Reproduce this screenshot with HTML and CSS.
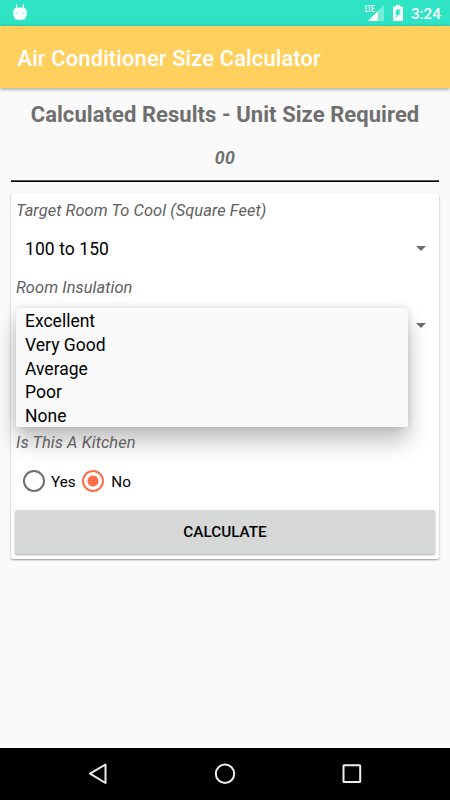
FILE: index.html
```html
<!DOCTYPE html>
<html lang="en">
<head>
<meta charset="utf-8">
<title>Air Conditioner Size Calculator</title>
<link rel="stylesheet" href="styles.css">
</head>
<body>
<div class="screen">
  <header class="status">
    <svg class="droid" width="14" height="18" viewBox="0 0 14 18">
      <path d="M3.300 0 4 4M10.700 0 10 4" stroke="#fff" stroke-width="1.2"/>
      <path d="M1.200 4.500Q7 2.600 12.800 4.500V13.500Q12.500 15.800 7 15.800T1.200 13.500Z" fill="#fff"/>
      <path d="M.6 6v6M13.400 6v6" stroke="#fff" stroke-width=".8"/>
      <circle cx="4" cy="9" r=".7" fill="#2ee4c4"/><circle cx="10" cy="9" r=".7" fill="#2ee4c4"/>
    </svg>
    <div class="status-right">
      <div class="signal">
        <svg width="20" height="18" viewBox="0 0 20 18">
          <path d="M19 1V17H3Z" fill="#fff" opacity=".35"/>
          <path d="M0 0H11.500V9H0Z" fill="#2ee4c4"/>
          <path d="M13 7V17H3Z" fill="#fff"/>
        </svg>
        <span class="lte">LTE</span>
      </div>
      <svg class="battery" width="10" height="16" viewBox="0 0 10 16">
        <path d="M3 0H7V1.500H9Q10 1.500 10 2.500V15Q10 16 9 16H1Q0 16 0 15V2.500Q0 1.500 1 1.500H3Z" fill="#fff"/>
        <path d="M3.500 4.500H8L6 7.500H8L2.500 13.500 4 9.500H2Z" fill="#2ee4c4"/>
      </svg>
      <span class="clock">3:24</span>
    </div>
  </header>
  <div class="toolbar"><h1>Air Conditioner Size Calculator</h1></div>
  <main>
    <h2>Calculated Results - Unit Size Required</h2>
    <p class="result">00</p>
    <hr>
    <section class="card">
      <label class="label">Target Room To Cool (Square Feet)</label>
      <div class="spinner"><span>100 to 150</span><i class="caret"></i></div>
      <label class="label">Room Insulation</label>
      <div class="spinner open">
        <i class="caret"></i>
        <ul class="menu">
          <li>Excellent</li><li>Very Good</li><li>Average</li><li>Poor</li><li>None</li>
        </ul>
      </div>
      <label class="label kitchen">Is This A Kitchen</label>
      <div class="radios">
        <span class="radio"></span><span class="yes">Yes</span>
        <span class="radio checked"></span><span class="no">No</span>
      </div>
      <button class="button">CALCULATE</button>
    </section>
  </main>
  <nav>
    <svg width="20" height="22" viewBox="0 0 20 22"><path d="M16.500 1.500V20L1 10.700Z"/></svg>
    <svg width="22" height="22" viewBox="0 0 22 22"><circle cx="11" cy="10.700" r="9.200"/></svg>
    <svg width="20" height="20" viewBox="0 0 20 20"><rect x="1.500" y="1.200" width="16.700" height="16.700" rx=".5"/></svg>
  </nav>
</div>
</body>
</html>
```
FILE: styles.css
```css
* { box-sizing: border-box; margin: 0; padding: 0; }
body { font-family: Roboto, sans-serif; background: #fafafa; color: #000; }
.screen { width: 450px; height: 800px; display: flex; flex-direction: column; overflow: hidden; }

.status { height: 26px; background: #2ee4c4; display: flex; justify-content: space-between; padding: 0 9px 0 13px; }
.droid { margin-top: 4px; }
.status-right { display: flex; }
.signal { position: relative; width: 28px; }
.signal svg { display: block; margin-top: 4px; }
.lte { position: absolute; left: 0; top: 4px; font-size: 9px; line-height: 10px; font-weight: 700; color: #fff; transform: scaleX(.66); transform-origin: left; }
.battery { margin-top: 5px; }
.clock { margin-left: 8px; font-size: 15.3px; line-height: 28px; font-weight: 500; color: #fff; }

.toolbar { height: 62px; padding-left: 17.5px; background: #ffd05e; box-shadow: 0 1px 4px rgba(0, 0, 0, .4); position: relative; }
.toolbar h1 { font-size: 21.9px; line-height: 65px; letter-spacing: .14px; font-weight: 500; color: #fff; white-space: nowrap; }

main { flex: 1; padding: 0 11px; }
h2 { margin-top: 12px; font-size: 22px; line-height: 30px; letter-spacing: .06px; font-weight: 700; color: #6f6f6f; text-align: center; white-space: nowrap; }
.result { margin-top: 16px; font-size: 17.8px; line-height: 24px; letter-spacing: .3px; font-weight: 700; font-style: italic; color: #6f6f6f; text-align: center; }
hr { margin-top: 10px; height: 2px; border: 0; border-top: 1px solid #555; background: #000; }

.card { margin-top: 11px; height: 366px; background: #fff; border-radius: 2px; box-shadow: 0 1px 2px rgba(0, 0, 0, .4); padding: 5px 4px 0; display: flex; flex-direction: column; }
.label { padding-left: 1px; font-size: 16.4px; line-height: 25px; letter-spacing: .07px; font-style: italic; color: #606060; white-space: nowrap; }
.spinner { height: 52px; padding: 0 9px 0 10px; display: flex; align-items: center; justify-content: space-between; font-size: 17.5px; letter-spacing: .08px; position: relative; }
.spinner span { margin-top: -1px; }
.caret { width: 0; height: 0; margin-top: -1px; border: 5.500px solid transparent; border-top-color: #6d6d6d; border-bottom: 0; }
.open { justify-content: flex-end; height: 103px; align-items: flex-start; padding-top: 24px; }
.menu { position: absolute; left: 1px; top: 8px; width: 392px; height: 119px; padding: 1px 9px 0; list-style: none; background: #fafafa; border-radius: 2px; box-shadow: 0 15px 22px rgba(0, 0, 0, .24), 0 0 9px rgba(0, 0, 0, .14); letter-spacing: 0; }
.menu li { height: 23.8px; line-height: 25px; }
.kitchen { margin-top: 27px; position: relative; }
.radios { display: flex; align-items: center; margin-top: 15px; padding-left: 8px; height: 22px; font-size: 15.3px; }
.radio { width: 22px; height: 22px; border: 2px solid #6f6f6f; border-radius: 50%; flex: none; }
.checked { border-color: #ff6e4a; background: radial-gradient(circle, #ff6e4a 5px, transparent 6px); }
.yes { margin: 1px 6.500px 0 6px; }
.no { margin: 1px 0 0 7px; }
.button { margin-top: 18px; height: 44px; width: 420px; border: 0; border-radius: 2px; background: #d6d8d7; box-shadow: 0 1px 2px rgba(0, 0, 0, .35); font: 500 15.3px Roboto, sans-serif; color: #000; }

nav { height: 52px; background: #000; display: flex; align-items: center; justify-content: space-between; padding: 0 88.500px; }
nav svg { fill: none; stroke: #eee; stroke-width: 2; stroke-linejoin: round; }
```
